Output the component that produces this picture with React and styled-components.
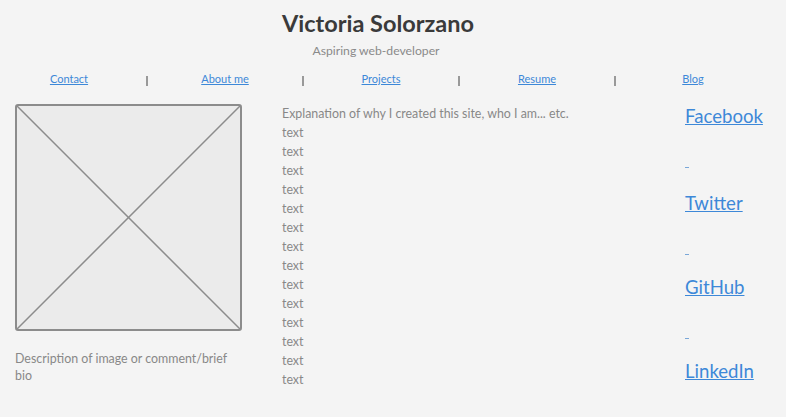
import React from "react";
import styled, { createGlobalStyle } from "styled-components";

const Global = createGlobalStyle`
  html, body { margin: 0; padding: 0; background: #f4f4f4; }
  body { font-family: Lato, "Noto Sans", sans-serif; }
`;

const Page = styled.div`
  width: 786px;
  height: 417px;
  overflow: hidden;
  background: #f4f4f4;
`;

const Header = styled.header`
  display: flex;
  flex-direction: column;
  align-items: center;
  padding-top: 9px;
`;

const Title = styled.h1`
  margin: 0 0 0 -30px;
  font-size: 23.5px;
  font-weight: 700;
  color: #3a3a3a;
  line-height: 28px;
`;

const Subtitle = styled.p`
  margin: 6px 0 0 -34px;
  font-size: 12.2px;
  color: #8a8a8a;
  line-height: 16px;
`;

const Nav = styled.nav`
  display: grid;
  grid-template-columns: repeat(9, 78px);
  align-items: center;
  margin: 13px 0 0 30px;
  font-size: 11px;
  line-height: 14px;
`;

const NavCell = styled.div`
  display: flex;
  justify-content: center;
`;

const Bar = styled.span`
  display: block;
  width: 1.5px;
  height: 10px;
  margin-top: 3px;
  background: #999;
`;

const Link = styled.a`
  color: #3d88d8;
  text-decoration: underline;
  cursor: pointer;
`;

const Main = styled.div`
  display: flex;
  margin-top: 18px;
`;

const LeftCol = styled.div`
  width: 227px;
  margin-left: 15px;
`;

const Placeholder = styled.div`
  width: 227px;
  height: 227px;
  box-sizing: border-box;
  border: 2px solid #8c8c8c;
  border-radius: 3px;
  background: #ebebeb;
  svg { display: block; }
`;

const Caption = styled.p`
  margin: 19px 0 0;
  width: 222px;
  font-size: 12.4px;
  line-height: 17px;
  color: #888;
`;

const MidCol = styled.div`
  margin-left: 40px;
  width: 360px;
  font-size: 12.4px;
  line-height: 19px;
  color: #888;
`;

const Line = styled.div``;

const RightCol = styled.div`
  margin-left: 43px;
  display: flex;
  flex-direction: column;
  font-size: 18.6px;
  line-height: 24px;
`;

const Social = styled(Link)`
  display: block;
  width: fit-content;
`;

const Gap = styled.div`
  height: ${(p) => p.$h}px;
  padding-top: 39px;
  box-sizing: border-box;
`;

const Tick = styled.span`
  display: block;
  width: 4px;
  height: 1px;
  background: #7aa7d8;
`;

const socials = ["Facebook", "Twitter", "GitHub", "LinkedIn"];
const navItems = ["Contact", "About me", "Projects", "Resume", "Blog"];

export default function App() {
  return (
    <Page>
      <Global />
      <Header>
        <Title>Victoria Solorzano</Title>
        <Subtitle>Aspiring web-developer</Subtitle>
      </Header>
      <Nav>
        {navItems.map((n, i) => (
          <React.Fragment key={n}>
            <NavCell>
              <Link>{n}</Link>
            </NavCell>
            {i < navItems.length - 1 && (
              <NavCell>
                <Bar />
              </NavCell>
            )}
          </React.Fragment>
        ))}
      </Nav>
      <Main>
        <LeftCol>
          <Placeholder>
            <svg width="223" height="223" viewBox="0 0 223 223">
              <line x1="0" y1="0" x2="223" y2="223" stroke="#8c8c8c" strokeWidth="1.5" />
              <line x1="223" y1="0" x2="0" y2="223" stroke="#8c8c8c" strokeWidth="1.5" />
            </svg>
          </Placeholder>
          <Caption>Description of image or comment/brief bio</Caption>
        </LeftCol>
        <MidCol>
          <Line>Explanation of why I created this site, who I am... etc.</Line>
          {Array.from({ length: 14 }).map((_, i) => (
            <Line key={i}>text</Line>
          ))}
        </MidCol>
        <RightCol>
          {socials.map((s, i) => (
            <React.Fragment key={s}>
              <Social>{s}</Social>
              {i < socials.length - 1 && (
                <Gap $h={i === 0 ? 63 : 60}>
                  <Tick />
                </Gap>
              )}
            </React.Fragment>
          ))}
        </RightCol>
      </Main>
    </Page>
  );
}
